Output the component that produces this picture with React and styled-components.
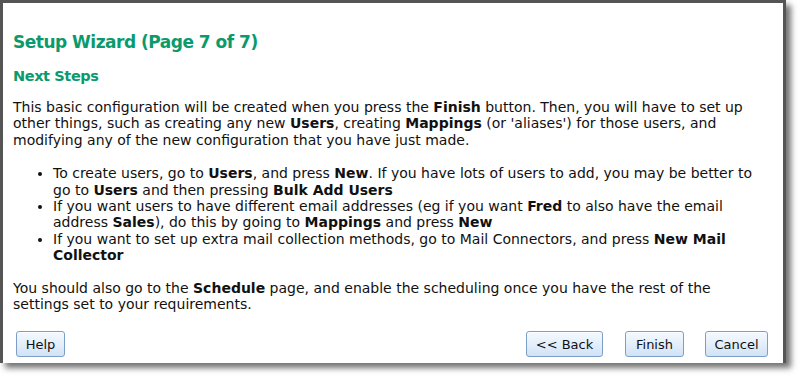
import React from "react";
import styled, { createGlobalStyle } from "styled-components";

const Global = createGlobalStyle`
  html, body { margin: 0; padding: 0; background: #ffffff; }
  body { font-family: "DejaVu Sans", Verdana, sans-serif; }
`;

const Page = styled.div`
  width: 802px;
  height: 378px;
  background: #ffffff;
  overflow: hidden;
`;

const Frame = styled.div`
  box-sizing: border-box;
  width: 786px;
  height: 363px;
  border: 3px solid #555555;
  border-bottom: none;
  background: #ffffff;
  box-shadow: 5px 5px 6px rgba(0, 0, 0, 0.55);
  display: flex;
  flex-direction: column;
  padding: 28px 2px 6px 10px;
  color: #111111;
  font-size: 14px;
  line-height: 16.4px;
`;

const Title = styled.h1`
  margin: 0;
  font-size: 17px;
  line-height: 22px;
  letter-spacing: -0.5px;
  font-weight: bold;
  color: #0b9a6c;
`;

const Subtitle = styled.h2`
  margin: 14px 0 0;
  font-size: 14.5px;
  line-height: 18px;
  letter-spacing: -0.4px;
  font-weight: bold;
  color: #0b9a6c;
`;

const Para = styled.p`
  margin: ${(p) => p.$top || 0}px 0 0;
  white-space: nowrap;
`;

const List = styled.ul`
  margin: 17px 0 0;
  padding-left: 40px;
  list-style: disc;
  white-space: nowrap;
`;

const Item = styled.li``;

const Footer = styled.div`
  margin-top: auto;
  display: flex;
  align-items: center;
  padding-left: 3px;
  padding-right: 13px;
`;

const Spacer = styled.div`
  flex: 1;
`;

const Button = styled.button`
  box-sizing: border-box;
  width: ${(p) => p.$w}px;
  height: 26px;
  padding: 0;
  margin-left: ${(p) => p.$gap || 0}px;
  font-family: "DejaVu Sans", Verdana, sans-serif;
  font-size: 13px;
  color: #111111;
  border: 1px solid #7d9fc5;
  border-radius: 3px;
  background: linear-gradient(to bottom, #f4f9ff 0%, #e4effb 50%, #cfe2f6 100%);
  box-shadow: inset 0 1px 0 rgba(255, 255, 255, 0.8);
  cursor: pointer;
`;

export default function App() {
  return (
    <>
      <Global />
      <Page>
        <Frame>
          <Title>Setup Wizard (Page 7 of 7)</Title>
          <Subtitle>Next Steps</Subtitle>
          <Para $top={14}>
            This basic configuration will be created when you press the <b>Finish</b> button. Then, you will have to set up
            <br />
            other things, such as creating any new <b>Users</b>, creating <b>Mappings</b> (or 'aliases') for those users, and
            <br />
            modifying any of the new configuration that you have just made.
          </Para>
          <List>
            <Item>
              To create users, go to <b>Users</b>, and press <b>New</b>. If you have lots of users to add, you may be better to
              <br />
              go to <b>Users</b> and then pressing <b>Bulk Add Users</b>
            </Item>
            <Item>
              If you want users to have different email addresses (eg if you want <b>Fred</b> to also have the email
              <br />
              address <b>Sales</b>), do this by going to <b>Mappings</b> and press <b>New</b>
            </Item>
            <Item>
              If you want to set up extra mail collection methods, go to Mail Connectors, and press <b>New Mail</b>
              <br />
              <b>Collector</b>
            </Item>
          </List>
          <Para $top={16}>
            You should also go to the <b>Schedule</b> page, and enable the scheduling once you have the rest of the
            <br />
            settings set to your requirements.
          </Para>
          <Footer>
            <Button $w={49}>Help</Button>
            <Spacer />
            <Button $w={77}>&lt;&lt; Back</Button>
            <Button $w={59} $gap={22}>Finish</Button>
            <Button $w={63} $gap={21}>Cancel</Button>
          </Footer>
        </Frame>
      </Page>
    </>
  );
}
